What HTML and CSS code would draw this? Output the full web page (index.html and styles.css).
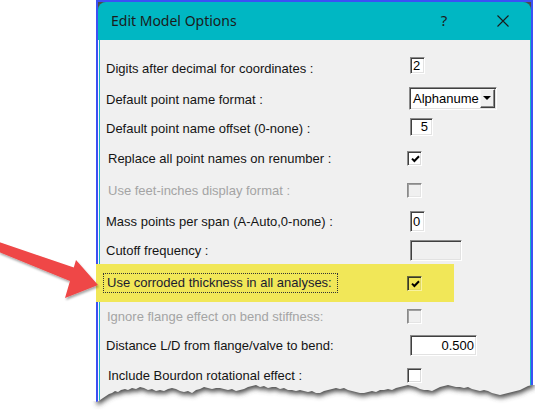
FILE: index.html
```html
<!DOCTYPE html>
<html>
<head>
<meta charset="utf-8">
<link rel="stylesheet" href="styles.css">
</head>
<body>
<div class="window">
  <div class="titlebar">
    <span class="title">Edit Model Options</span>
    <span class="tb-help">?</span>
    <span class="tb-close"><svg width="12" height="12" viewBox="0 0 12 12"><path d="M0.5 0.5 L11.5 11.5 M11.5 0.5 L0.5 11.5" stroke="#1a1a1a" stroke-width="1.1" fill="none"/></svg></span>
  </div>
  <div class="client">
    <div class="form">
      <div class="row">
        <span class="label">Digits after decimal for coordinates :</span>
        <span class="edit e-digits">2</span>
      </div>
      <div class="row">
        <span class="label">Default point name format :</span>
        <span class="combo"><span class="combo-text">Alphanume</span><span class="combo-btn"><span class="tri"></span></span></span>
      </div>
      <div class="row">
        <span class="label">Default point name offset (0-none) :</span>
        <span class="edit e-offset">5</span>
      </div>
      <div class="row chk">
        <span class="label">Replace all point names on renumber :</span>
        <span class="cb"><svg width="9" height="8" viewBox="0 0 9 8"><path d="M1 3.6 L3.4 6 L8 1.2" stroke="#000" stroke-width="2" fill="none"/></svg></span>
      </div>
      <div class="row chk dis">
        <span class="label">Use feet-inches display format :</span>
        <span class="cb cb-dis"></span>
      </div>
      <div class="row">
        <span class="label">Mass points per span (A-Auto,0-none) :</span>
        <span class="edit e-mass">0</span>
      </div>
      <div class="row">
        <span class="label">Cutoff frequency :</span>
        <span class="edit e-cutoff"></span>
      </div>
      <div class="row chk hl">
        <span class="label"><span class="focus">Use corroded thickness in all analyses:</span></span>
        <span class="cb cb-hl"><svg width="9" height="8" viewBox="0 0 9 8"><path d="M1 3.6 L3.4 6 L8 1.2" stroke="#000" stroke-width="2" fill="none"/></svg></span>
      </div>
      <div class="row chk dis ign">
        <span class="label">Ignore flange effect on bend stiffness:</span>
        <span class="cb cb-dis"></span>
      </div>
      <div class="row">
        <span class="label">Distance L/D from flange/valve to bend:</span>
        <span class="edit e-dist">0.500</span>
      </div>
      <div class="row chk">
        <span class="label">Include Bourdon rotational effect :</span>
        <span class="cb"></span>
      </div>
    </div>
  </div>
</div>

<svg class="arrow" width="105" height="75" viewBox="0 230 105 75">
  <defs>
    <filter id="ash" x="-20%" y="-20%" width="140%" height="150%">
      <feDropShadow dx="1" dy="2" stdDeviation="1.2" flood-color="#000" flood-opacity="0.35"/>
    </filter>
  </defs>
  <polygon points="-1,242 73.8,267.6 76,260 98,285 65,298 70,281 -1,252" fill="#ef4646" filter="url(#ash)"/>
</svg>

<svg class="torn" width="535" height="40" viewBox="0 370 535 40">
  <defs>
    <clipPath id="below">
      <path d="M90,401 L94,401 L97,402 L100,400 L103,398 L106,396 L109,394 L112,393 L115,391 L118,392 L121,390 L125,389 L128,390 L132,388 L136,389 L140,387 L144,388 L148,390 L152,389 L156,391 L160,390 L164,391 L168,389 L172,388 L176,389 L180,391 L184,392 L188,391 L192,393 L196,390 L200,389 L204,387 L208,388 L212,389 L216,388 L220,388 L224,389 L228,390 L232,389 L236,391 L240,390 L244,389 L248,387 L252,386 L256,385 L260,387 L264,386 L268,388 L272,387 L276,387 L280,389 L284,388 L288,390 L292,390 L296,391 L300,390 L304,391 L308,392 L312,391 L316,393 L320,393 L324,391 L328,390 L332,389 L336,388 L340,389 L344,388 L348,390 L352,391 L356,392 L360,393 L364,393 L368,392 L372,391 L376,392 L380,390 L384,390 L388,389 L392,390 L396,388 L400,387 L404,386 L408,385 L412,386 L416,387 L420,389 L424,390 L428,390 L432,391 L436,389 L440,387 L444,386 L448,385 L452,386 L456,387 L460,387 L464,388 L468,387 L472,389 L476,390 L480,391 L484,390 L488,391 L492,393 L496,394 L500,395 L504,394 L508,393 L512,392 L516,391 L520,390 L524,388 L528,386 L532,385 L536,385 L536,412 L90,412 Z"/>
    </clipPath>
    <filter id="blur" x="-5%" y="-50%" width="110%" height="200%">
      <feGaussianBlur stdDeviation="2.6"/>
    </filter>
  </defs>
  <rect x="88" y="370" width="450" height="42" fill="#fff" clip-path="url(#below)"/>
  <g clip-path="url(#below)">
    <path transform="translate(1,3)" filter="url(#blur)" fill="#4a4a4a" d="M96,360 L533,360 L533,385 L532,385 L528,386 L524,388 L520,390 L516,391 L512,392 L508,393 L504,394 L500,395 L496,394 L492,393 L488,391 L484,390 L480,391 L476,390 L472,389 L468,387 L464,388 L460,387 L456,387 L452,386 L448,385 L444,386 L440,387 L436,389 L432,391 L428,390 L424,390 L420,389 L416,387 L412,386 L408,385 L404,386 L400,387 L396,388 L392,390 L388,389 L384,390 L380,390 L376,392 L372,391 L368,392 L364,393 L360,393 L356,392 L352,391 L348,390 L344,388 L340,389 L336,388 L332,389 L328,390 L324,391 L320,393 L316,393 L312,391 L308,392 L304,391 L300,390 L296,391 L292,390 L288,390 L284,388 L280,389 L276,387 L272,387 L268,388 L264,386 L260,387 L256,385 L252,386 L248,387 L244,389 L240,390 L236,391 L232,389 L228,390 L224,389 L220,388 L216,388 L212,389 L208,388 L204,387 L200,389 L196,390 L192,393 L188,391 L184,392 L180,391 L176,389 L172,388 L168,389 L164,391 L160,390 L156,391 L152,389 L148,390 L144,388 L140,387 L136,389 L132,388 L128,390 L125,389 L121,390 L118,392 L115,391 L112,393 L109,394 L106,396 L103,398 L100,400 L97,402 L96,402 Z"/>
  </g>
</svg>
</body>
</html>
```

FILE: styles.css
```css
* { box-sizing: border-box; }

body {
  margin: 0;
  width: 535px;
  height: 410px;
  overflow: hidden;
  background: #ffffff;
  position: relative;
  font-family: "Liberation Sans", Arial, sans-serif;
}

.window {
  margin-left: 96px;
  width: 437px;
  height: 410px;
  border: 2px solid #3c50f4;
  border-bottom: none;
  background: #4c4c4c;
  display: flex;
  flex-direction: column;
}

.titlebar {
  height: 38px;
  flex: none;
  background: #00b7c3;
  border-radius: 8px 8px 0 0;
  display: flex;
  align-items: center;
  font-family: "Noto Sans", "Open Sans", sans-serif;
  font-size: 14px;
  color: #1b1b1b;
}

.title {
  flex: 1;
  padding-left: 13px;
  padding-bottom: 2px;
}

.tb-help {
  width: 14px;
  text-align: center;
  margin-right: 46px;
  font-size: 15px;
  padding-bottom: 2px;
}

.tb-close {
  width: 12px;
  height: 12px;
  margin-right: 22px;
  display: flex;
}

.client {
  flex: 1;
  background: #f0f0f0;
  border-left: 1px solid #f6fbfc;
}

.form {
  height: 100%;
  border-left: 1px solid #14b6c2;
  border-right: 1px solid #14b6c2;
  padding-top: 12px;
  display: grid;
  grid-template-rows: 32px 30px 29px 31px 32px 31px 27px 38px 28px 30px 30px;
  align-content: start;
}

.row {
  display: grid;
  grid-template-columns: 307px auto;
  align-items: center;
  justify-items: start;
  font-size: 13px;
  color: #141414;
}

.label {
  padding-left: 6px;
  white-space: nowrap;
}

.row.chk .label { padding-left: 8px; }
.row.ign .label { padding-left: 7px; }
.row.dis .label { color: #a4a4a4; }

.edit {
  margin-left: 3px;
  height: 21px;
  background: #ffffff;
  border: 1px solid;
  border-color: #8a8a8a #ffffff #ffffff #8a8a8a;
  box-shadow: inset 1px 1px 0 #404040, inset -1px -1px 0 #e2e2e2;
  font-size: 13px;
  line-height: 19px;
  padding: 0 2px 0 2px;
  color: #000;
}

.e-digits { width: 15px; height: 17px; line-height: 15px; margin-bottom: 5px; }
.e-offset { width: 23px; height: 18px; line-height: 16px; text-align: right; padding-right: 4px; margin-bottom: 4px; }
.e-mass { width: 15px; }
.e-cutoff { width: 52px; background: #f0f0f0; }
.e-dist { width: 67px; text-align: right; padding-right: 2px; }

.combo {
  margin-left: 2px;
  margin-bottom: 2px;
  width: 88px;
  height: 23px;
  display: flex;
  background: #ffffff;
  border: 1px solid;
  border-color: #8a8a8a #ffffff #ffffff #8a8a8a;
  box-shadow: inset 1px 1px 0 #404040, inset -1px -1px 0 #e2e2e2;
  padding: 1px 1px 1px 1px;
}

.combo-text {
  flex: 1;
  padding-left: 2px;
  font-size: 13px;
  line-height: 19px;
  color: #000;
}

.combo-btn {
  width: 15px;
  height: 19px;
  background: #f0f0f0;
  border: 1px solid;
  border-color: #f8f8f8 #404040 #404040 #f8f8f8;
  box-shadow: inset -1px -1px 0 #8a8a8a;
  display: flex;
  align-items: center;
  justify-content: center;
}

.tri {
  width: 0;
  height: 0;
  border-left: 4px solid transparent;
  border-right: 4px solid transparent;
  border-top: 4px solid #000;
  margin-left: -1px;
}

.cb {
  width: 15px;
  height: 15px;
  background: #ffffff;
  border: 1px solid;
  border-color: #8a8a8a #ffffff #ffffff #8a8a8a;
  box-shadow: inset 1px 1px 0 #404040, inset -1px -1px 0 #dcdcdc;
  display: flex;
  align-items: center;
  justify-content: center;
  padding: 1px 0 0 1px;
}

.cb-dis {
  background: #f0f0f0;
  box-shadow: inset 1px 1px 0 #a0a0a0, inset -1px -1px 0 #e4e4e4;
}

.row.hl {
  margin-left: -4px;
  width: 358px;
  padding-left: 4px;
  background: #f1e758;
}

.row.hl .label { padding-left: 3px; }

.focus {
  display: inline-block;
  height: 20px;
  line-height: 18px;
  padding: 0 5px 0 3px;
  border: 1px dotted #333;
  color: #1a1a30;
}

.cb-hl {
  background: transparent;
  border-color: #6a6a40 #f8f2a0 #f8f2a0 #6a6a40;
  box-shadow: inset 1px 1px 0 #3a3a20, inset -1px -1px 0 #e0d860;
}

.arrow {
  position: absolute;
  left: 0;
  top: 230px;
  overflow: visible;
}

.torn {
  position: absolute;
  left: 0;
  top: 370px;
}
```
